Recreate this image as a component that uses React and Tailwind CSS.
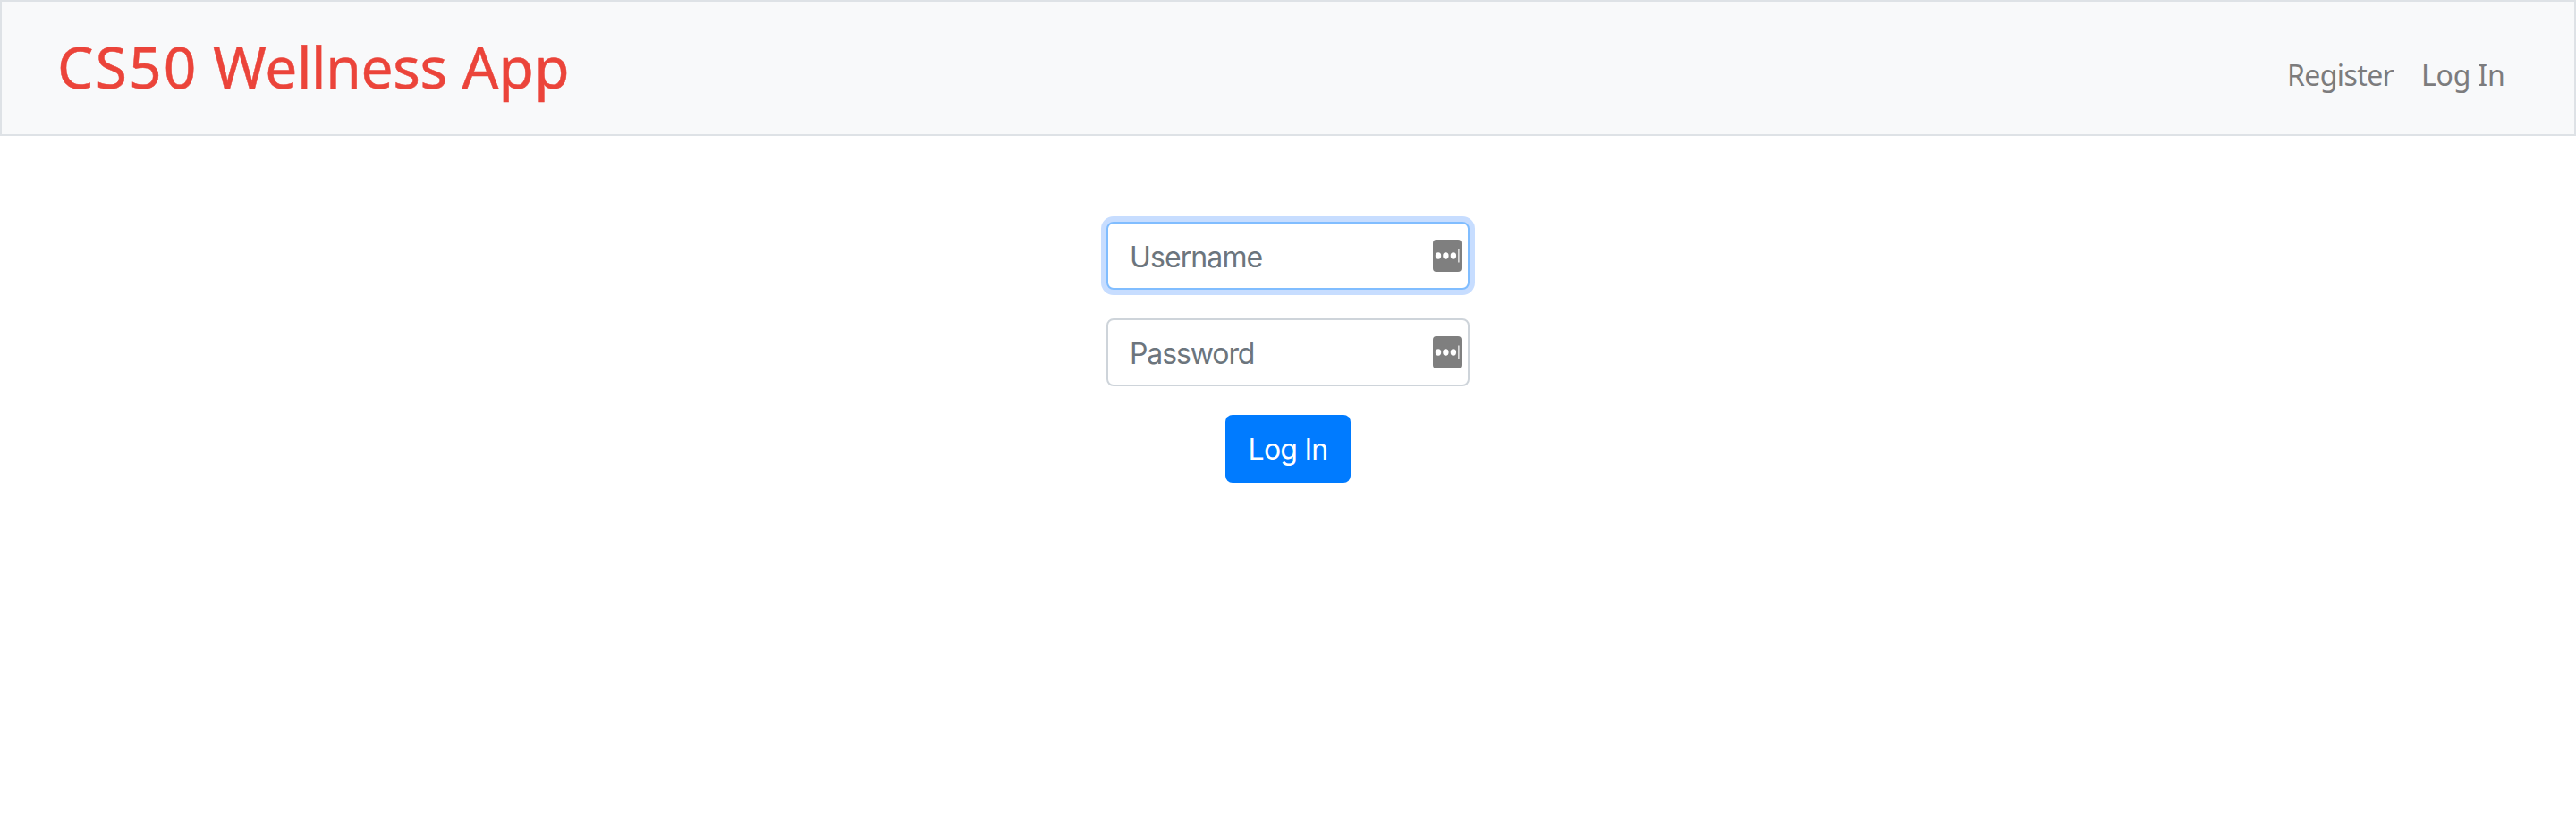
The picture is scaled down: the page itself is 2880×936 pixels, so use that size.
function ManagerBadge() {
  return (
    <svg className="h-9 w-8 shrink-0" viewBox="0 0 32 36" aria-hidden="true">
      <rect width="32" height="36" rx="4" fill="#7f7f7f" />
      <ellipse cx="6" cy="18" rx="3.2" ry="3.7" fill="#fff" />
      <ellipse cx="14.4" cy="18" rx="3.2" ry="3.7" fill="#fff" />
      <ellipse cx="22.9" cy="18" rx="3.2" ry="3.7" fill="#fff" />
      <rect x="28.1" y="10.5" width="1.5" height="15" fill="#e4e4e4" />
    </svg>
  );
}

function Field({ type, name, className }) {
  return (
    <label
      className={`flex h-[76px] w-[406px] items-center rounded-lg border-2 bg-white pr-[7px] pl-6 ${className}`}
    >
      <input
        type={type}
        placeholder={name}
        aria-label={name}
        className="h-[50px] min-w-0 flex-1 bg-transparent pt-[2px] outline-none placeholder:text-[#6c757d] placeholder:opacity-100"
      />
      <ManagerBadge />
    </label>
  );
}

export default function App() {
  return (
    <div className="min-h-screen bg-white font-['Inter',sans-serif] text-[32px]">
      <nav className="flex h-[152px] items-start justify-between border-2 border-[#dee2e6] bg-[#f8f9fa] pr-[77px] pl-[62px] font-['Noto_Sans',sans-serif]">
        <a
          href="#"
          className="pt-[25px] text-[64px] leading-[96px] text-[#eb443a] [-webkit-text-stroke:0.5px_#eb443a]"
        >
          <span className="tracking-[2.2px]">CS50</span>{" "}
          <span className="tracking-[-0.35px]">Wellness</span>{" "}
          <span className="tracking-[0.3px]">App</span>
        </a>
        <div className="flex gap-8 pt-[58px] leading-[48px] text-[#7c7c7d]">
          <a href="#" className="w-[118px] tracking-[-0.6px] whitespace-nowrap">Register</a>
          <a href="#" className="w-[94px] tracking-[-0.2px] whitespace-nowrap">Log In</a>
        </div>
      </nav>
      <main className="flex flex-col items-center gap-8 pt-24">
        <Field
          type="text"
          name="Username"
          className="border-[#80bdff] tracking-[-0.9px] ring-[6px] ring-[#c7ddff]"
        />
        <Field type="password" name="Password" className="border-[#ced4da] tracking-[-1.1px]" />
        <button className="h-[76px] w-[140px] rounded-lg bg-[#007bff] pt-[2px] leading-[48px] tracking-[-0.75px] text-white">
          Log In
        </button>
      </main>
    </div>
  );
}
